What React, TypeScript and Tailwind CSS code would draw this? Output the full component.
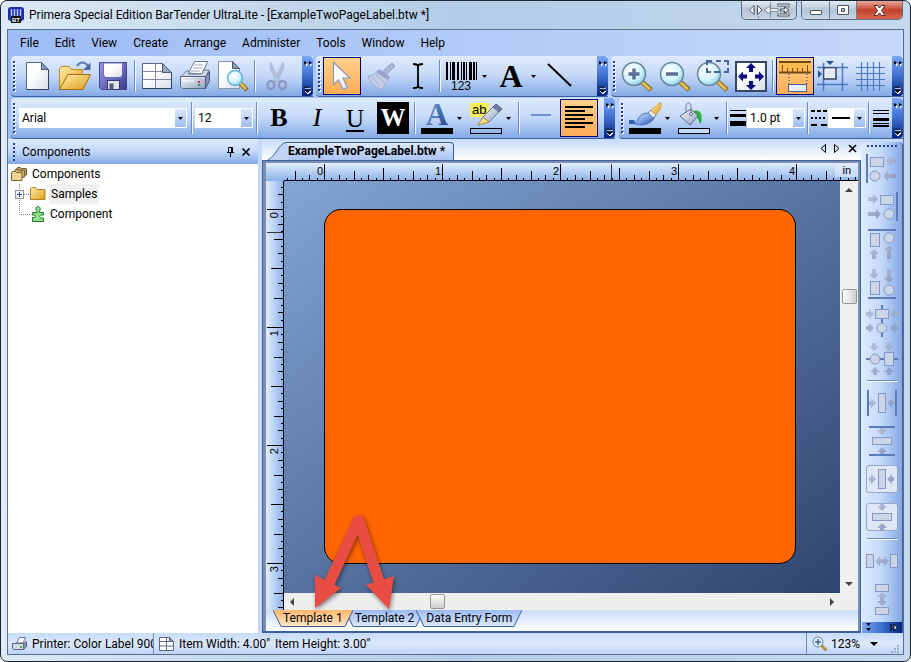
import type { ReactNode } from 'react';

const menus = ['File', 'Edit', 'View', 'Create', 'Arrange', 'Administer', 'Tools', 'Window', 'Help'];

const PX_PER_INCH = 118;
const STEP = PX_PER_INCH / 16;

// shared gradients for all the toolbar drawings
function Gradients() {
  return (
    <svg className="absolute h-0 w-0" aria-hidden="true">
      <defs>
        <linearGradient id="paper" x1="0" y1="0" x2="1" y2="1">
          <stop offset="0.4" stopColor="#fff" />
          <stop offset="1" stopColor="#d5dcec" />
        </linearGradient>
        <linearGradient id="gold" x1="0" y1="0" x2="1" y2="1">
          <stop offset="0" stopColor="#fff0a8" />
          <stop offset="1" stopColor="#e09a1c" />
        </linearGradient>
        <linearGradient id="violet" x1="0" y1="0" x2="1" y2="1">
          <stop offset="0" stopColor="#9c9ce8" />
          <stop offset="1" stopColor="#3c3c90" />
        </linearGradient>
        <linearGradient id="metal" x1="0" y1="0" x2="1" y2="1">
          <stop offset="0" stopColor="#fdfdff" />
          <stop offset="1" stopColor="#8e9cc0" />
        </linearGradient>
        <linearGradient id="bristle" x1="0" y1="0" x2="1" y2="1">
          <stop offset="0" stopColor="#dbe8ff" />
          <stop offset="0.5" stopColor="#7fa4e8" />
          <stop offset="1" stopColor="#2d51a4" />
        </linearGradient>
        <radialGradient id="lens" cx="0.4" cy="0.35" r="0.7">
          <stop offset="0" stopColor="#fff" />
          <stop offset="0.6" stopColor="#d3f3fd" />
          <stop offset="1" stopColor="#7fcdea" />
        </radialGradient>
        <linearGradient id="blueA" x1="0" y1="0" x2="1" y2="1">
          <stop offset="0" stopColor="#a9c2ea" />
          <stop offset="0.5" stopColor="#4a6fae" />
          <stop offset="1" stopColor="#1d3f7c" />
        </linearGradient>
        <linearGradient id="faded" x1="0" y1="0" x2="1" y2="1">
          <stop offset="0" stopColor="#b8c2dc" />
          <stop offset="1" stopColor="#8c9ac2" />
        </linearGradient>
      </defs>
    </svg>
  );
}

function Icon({ children }: { children: ReactNode }) {
  return (
    <svg className="h-8 w-8 shrink-0 overflow-visible" viewBox="0 0 32 32" fill="none" aria-hidden="true">
      {children}
    </svg>
  );
}

function Caret() {
  return (
    <svg className="h-[3px] w-[5px] shrink-0" viewBox="0 0 5 3" aria-hidden="true">
      <path d="M0 0h5L2.500 3z" fill="#000" />
    </svg>
  );
}

function ToolButton({ label, active, children }: { label: string; active?: boolean; children: ReactNode }) {
  return (
    <button
      aria-label={label}
      className={
        active
          ? 'flex h-[38px] w-[38px] shrink-0 items-center justify-center border border-[#000080] bg-linear-to-b from-[#ffd08c] to-[#ffac55]'
          : 'flex h-[38px] w-[38px] shrink-0 items-center justify-center'
      }
    >
      {children}
    </button>
  );
}

function DropButton({ label, children }: { label: string; children: ReactNode }) {
  return (
    <button aria-label={label} className="flex h-[38px] w-[49px] shrink-0 items-center gap-1 pl-[3px]">
      {children}
      <Caret />
    </button>
  );
}

function Separator() {
  return <div className="mx-[2px] h-[32px] w-[2px] shrink-0 border-l border-r border-l-[#6a8ccb] border-r-[#f1f6ff]" />;
}

function Grip() {
  return (
    <svg className="mx-[2px] h-8 w-[3px] shrink-0" aria-hidden="true">
      {[1, 5, 9, 13, 17, 21, 25, 29].map((y) => (
        <g key={y}>
          <path d={`M1 ${y + 1}h2v2h-2z`} fill="#fff" />
          <path d={`M0 ${y}h2v2h-2z`} fill="#27418e" />
        </g>
      ))}
    </svg>
  );
}

function Overflow() {
  return (
    <button aria-label="Toolbar options" className="ml-auto w-[11px] shrink-0 self-stretch rounded-r-sm bg-linear-to-b from-[#7aa7f3] via-[#3e6fd0] to-[#04217f]">
      <svg className="h-full w-full" viewBox="0 0 11 41" aria-hidden="true">
        <path d="M3 6l2 2-2 2zM7 6l2 2-2 2z" transform="translate(1 1)" fill="#fff" />
        <path d="M2 5l3 2-3 2zM7 5l3 2-3 2z" fill="#000" />
        <path d="M3 33h6M3 36h6l-3 3z" stroke="#fff" fill="#fff" />
        <path d="M2 32h6M3 35h5l-2.500 2.500z" stroke="#000" fill="#000" />
      </svg>
    </button>
  );
}

function Toolbar({ className, children }: { className: string; children: ReactNode }) {
  return (
    <div
      role="toolbar"
      className={'flex h-[41px] items-center overflow-hidden rounded-l-sm border-b border-[#3b619c] bg-linear-to-b from-[#dfebfd] via-[#c3d8f8] to-[#84a9e5] ' + className}
    >
      <Grip />
      {children}
      <Overflow />
    </div>
  );
}

function Combo({ label, value, className }: { label: string; value: string; className: string }) {
  return (
    <div className={'relative h-5 shrink-0 bg-white ' + className}>
      <select aria-label={label} defaultValue={value} className="block h-5 w-full appearance-none bg-transparent pl-[3px] text-[12px] leading-5 outline-none">
        <option value={value}>{value}</option>
      </select>
      <span className="pointer-events-none absolute top-px right-px bottom-px flex w-[11px] items-center justify-center bg-linear-to-b from-[#dbe8fc] to-[#9dbdf0]">
        <Caret />
      </span>
    </div>
  );
}

function Lens({ cx, children }: { cx: number; children?: ReactNode }) {
  return (
    <Icon>
      <path d="M20 21l10 9" stroke="#8a6a1e" strokeWidth="5" />
      <path d="M20 21l9 8.500" stroke="#e9be55" strokeWidth="3" />
      <circle cx={cx} cy="14" r="11.500" fill="url(#lens)" stroke="#6d8494" strokeWidth="1.500" />
      {children}
    </Icon>
  );
}

function TitleBar() {
  return (
    <header className="flex h-[28px] items-start pr-[7px] pl-[7px]">
      <svg className="mt-[6px] h-4 w-4 shrink-0" viewBox="0 0 16 16" aria-hidden="true">
        <rect width="16" height="14" rx="3" fill="#1b2aa8" />
        <path d="M3.500 2v9M6.500 2v9M9.500 2v9M12.500 2v9" stroke="#b6c6ff" strokeWidth="1.500" />
        <rect x="3" y="9" width="10" height="7" fill="#111" />
        <text x="8" y="15" textAnchor="middle" fontSize="6" fontWeight="bold" fill="#fff" fontFamily="Liberation Sans, sans-serif">
          BT
        </text>
      </svg>
      <h1 className="ml-[5px] truncate pt-[5px] text-[12px] leading-[18px]">Primera Special Edition BarTender UltraLite - [ExampleTwoPageLabel.btw *]</h1>
      <div className="ml-auto flex h-[19px] shrink-0 overflow-hidden rounded-b-[5px] border border-t-0 border-[#5c6d80] bg-linear-to-b from-[#e3ebf3] via-[#b4c4d6] to-[#c8d8e8]">
        <button aria-label="Move to other monitor" className="flex w-[54px] items-center justify-center">
          <svg className="h-4 w-[54px]" viewBox="0 0 54 16" aria-hidden="true">
            <path d="M12 3.500v9L7.500 8zM15.500 3.500v9L20 8z" fill="#fff" stroke="#4a5566" />
            <path d="M22 8l6-4v2.500h8v3h-8V12z" fill="#e8eef4" stroke="#8792a0" />
            <path d="M28.500 0v16M16.500 14v2" stroke="#7b8a9a" />
            <path d="M37 5V3h9v2.500M46 10.500V13h-9v-2" fill="none" stroke="#4a5566" strokeWidth="3" />
            <path d="M37 5V3h9v2.500M46 10.500V13h-9v-2" fill="none" stroke="#fff" />
            <path d="M38.500 7h4V5l4.500 3-4.500 3V9h-4z" fill="#fff" stroke="#4a5566" />
          </svg>
        </button>
      </div>
      <div className="ml-[4px] flex h-[19px] shrink-0 overflow-hidden rounded-b-[5px] border border-t-0 border-[#5c6d80]">
        <button aria-label="Minimize" className="flex w-[28px] items-center justify-center border-r border-[#6d7d8f] bg-linear-to-b from-[#e3ebf3] via-[#b4c4d6] to-[#c8d8e8]">
          <span className="mt-1 h-[5px] w-3 rounded-[1px] border border-[#4a5566] bg-white" />
        </button>
        <button aria-label="Maximize" className="flex w-[27px] items-center justify-center border-r border-[#6d7d8f] bg-linear-to-b from-[#e3ebf3] via-[#b4c4d6] to-[#c8d8e8]">
          <svg className="h-[11px] w-3" viewBox="0 0 12 11" aria-hidden="true">
            <path d="M.5 .5h11v9H.5zM4.500 3.500v3h3v-3z" fill="#fff" fillRule="evenodd" stroke="#4a5566" />
          </svg>
        </button>
        <button aria-label="Close" className="flex w-[45px] items-center justify-center bg-linear-to-b from-[#e8a99b] via-[#c2402b] to-[#d9694d]">
          <svg className="h-[11px] w-[13px]" viewBox="0 0 13 11" aria-hidden="true">
            <path d="M1 .5h3.500l2 2.500 2-2.500H12L8.500 5.500l3.500 5H8.500l-2-2.500-2 2.500H1l3.500-5z" fill="#fff" stroke="#5b2a2a" />
          </svg>
        </button>
      </div>
    </header>
  );
}

function StandardToolbar() {
  return (
    <Toolbar className="w-[302px] shrink-0">
      <ToolButton label="New">
        <Icon>
          <path d="M5.500 2.500h15l7 7v20h-22z" fill="url(#paper)" stroke="#5a6885" />
          <path d="M20.500 2.500v7h7z" fill="#8d99b4" stroke="#4a5877" />
          <path d="M27.500 10v19.500h-22" stroke="#33425f" />
        </Icon>
      </ToolButton>
      <ToolButton label="Open">
        <Icon>
          <path d="M.5 29V9l2-2.500h8l2 3h11v4" fill="url(#gold)" stroke="#b98a2a" />
          <path d="M.5 29.500L9 14.500h22.500L24 29.500z" fill="url(#gold)" stroke="#a06e12" />
          <path d="M18 6c3-5 8-4.500 11 0" stroke="#5b7bb0" strokeWidth="2" />
          <path d="M31.500 2.500V10H24z" fill="#4a6ba5" />
        </Icon>
      </ToolButton>
      <ToolButton label="Save">
        <Icon>
          <path d="M2.500 2.500h27v27h-25l-2-2z" fill="url(#violet)" stroke="#45458f" />
          <path d="M6.500 3h19v12l-2 2.500h-15l-2-2.500z" fill="url(#paper)" stroke="#6b6bb8" />
          <path d="M10.500 20.500h12v9h-12z" fill="#dfe3ee" stroke="#343477" />
          <path d="M12.500 23.500h4v6h-4z" fill="#50587c" />
        </Icon>
      </ToolButton>
      <Separator />
      <ToolButton label="Page setup">
        <Icon>
          <path d="M1.500 3.500h20l9 9v16h-29z" fill="url(#paper)" stroke="#5a6885" />
          <path d="M1.500 11.500h20M1.500 19.500h29M14.500 3.500v25" stroke="#7f8aa2" />
          <path d="M21.500 3.500v9h9z" fill="#9aa6bd" stroke="#4a5877" />
          <path d="M30.500 12.500v16h-29" stroke="#33425f" />
        </Icon>
      </ToolButton>
      <ToolButton label="Print">
        <Icon>
          <path d="M9.500 13l6-11.500h13L23 14z" fill="#fff" stroke="#6b7890" />
          <path d="M15 5h9M14 8h9M12 11h9" stroke="#9aa5bb" />
          <path d="M1.500 17l6-6h3l-1 3h13l2-4h5.500l-3 7z" fill="#cfd6e4" stroke="#6b7890" />
          <path d="M1.500 16.500h25v12h-23l-2-2z" fill="url(#metal)" stroke="#5a6885" />
          <path d="M26.500 16.500l4-5v9l-4 8z" fill="#8793ad" stroke="#4a5877" />
          <path d="M3 21h12" stroke="#fff" />
          <path d="M19 21h2v2h-2z" fill="#d13a2a" />
          <path d="M19 24h2v2h-2z" fill="#37a33b" />
        </Icon>
      </ToolButton>
      <ToolButton label="Print preview">
        <Icon>
          <path d="M1.500 1.500h14l7 7v20h-21z" fill="url(#paper)" stroke="#8a94a8" />
          <path d="M15.500 1.500v7h7z" fill="#8d99b4" stroke="#4a5877" />
          <path d="M23 23l7 7" stroke="#8a6a1e" strokeWidth="4.500" />
          <path d="M23 23l6 6" stroke="#e9be55" strokeWidth="2.500" />
          <circle cx="18" cy="18" r="7.500" fill="url(#lens)" stroke="#62b4d8" strokeWidth="1.500" />
        </Icon>
      </ToolButton>
      <Separator />
      <ToolButton label="Cut">
        <Icon>
          <path d="M9.500 2l9 19-3 1L9 8zM22 2l-9 19 3 1L23 8z" fill="#b4bfdb" stroke="#98a5c8" strokeWidth="0.500" />
          <ellipse cx="10" cy="25" rx="3.500" ry="4" stroke="#8b97c3" strokeWidth="2.500" />
          <ellipse cx="21.500" cy="25" rx="3.500" ry="4" stroke="#8b97c3" strokeWidth="2.500" />
        </Icon>
      </ToolButton>
    </Toolbar>
  );
}

function CreateToolbar() {
  const bars = [
    [0, 2], [4, 1], [6, 3], [11, 2], [15, 1], [17, 2], [20, 1], [23, 3], [27, 2], [30, 1],
  ];
  return (
    <Toolbar className="w-[292px] shrink-0">
      <ToolButton label="Select" active>
        <Icon>
          <path d="M7.500 2.500v22l5-4.500 4.500 9.500 4.500-2-4.500-9.500h7z" fill="url(#paper)" stroke="#8c96b5" strokeWidth="1.200" />
        </Icon>
      </ToolButton>
      <ToolButton label="Format painter">
        <Icon>
          <path d="M28 3l3 3-9 9-4-3z" fill="#a9b5d6" stroke="#8f9cc4" />
          <path d="M15 9l11 8-2 3L12 12z" fill="#98a5ca" />
          <path d="M12 12l12 8-6 9C12 28 6 23 4 16c3 0 6-1 8-4z" fill="#c2cce4" stroke="#a0accc" />
          <path d="M8 17l8 9M12 15l9 8" stroke="#a5b1d1" />
        </Icon>
      </ToolButton>
      <ToolButton label="Text tool">
        <Icon>
          <path d="M11 4c3 0 5 0 5 2.500C16 4 18 4 21 4M16 5v22M11 28c3 0 5 0 5-2.500 0 2.500 2 2.500 5 2.500" stroke="#000" strokeWidth="1.800" />
        </Icon>
      </ToolButton>
      <Separator />
      <DropButton label="Create barcode">
        <Icon>
          {bars.map(([x, w]) => (
            <rect key={x} x={x} y="2" width={w} height="18" fill="#000" />
          ))}
          <text x="15" y="30" textAnchor="middle" fontSize="12" fill="#000" fontFamily="Liberation Sans, sans-serif">
            123
          </text>
        </Icon>
      </DropButton>
      <DropButton label="Create text">
        <span className="w-8 text-center font-['Liberation_Serif',serif] text-[32px] leading-8 font-bold">A</span>
      </DropButton>
      <ToolButton label="Create line">
        <Icon>
          <path d="M4 4l23 22" stroke="#000" strokeWidth="2" />
        </Icon>
      </ToolButton>
    </Toolbar>
  );
}

function ViewToolbar() {
  return (
    <Toolbar className="min-w-0 flex-1">
      <ToolButton label="Zoom in">
        <Lens cx={13}>
          <path d="M13 8.500v11M7.500 14h11" stroke="#5b6f98" strokeWidth="3.500" />
        </Lens>
      </ToolButton>
      <ToolButton label="Zoom out">
        <Lens cx={13}>
          <path d="M7 14h12" stroke="#5b6f98" strokeWidth="3.500" />
        </Lens>
      </ToolButton>
      <ToolButton label="Zoom to region">
        <Lens cx={12}>
          <path d="M10 5V1h5M19 1h5M27 1h4v4M31 8v4h-4M23 12h-6M14 12h-4V8" stroke="#46669f" strokeWidth="2" />
        </Lens>
      </ToolButton>
      <ToolButton label="Fit to window">
        <Icon>
          <rect x="1" y="2" width="30" height="29" fill="url(#paper)" stroke="#36465f" strokeWidth="2" />
          <path d="M16 3l5 5h-3v4h-4V8h-3zM16 30l5-5h-3v-4h-4v4h-3zM3 16.500l5-5v3h4v4H8v3zM29 16.500l-5-5v3h-4v4h4v3z" fill="#0a0a7e" />
        </Icon>
      </ToolButton>
      <Separator />
      <ToolButton label="Rulers" active>
        <Icon>
          <rect x="0" y="1" width="32" height="12" fill="#ffb94f" />
          <path d="M0 2h32M0 12.500h32" stroke="#6b4a12" strokeWidth="2" />
          <path d="M3.500 5v7M8.500 8v4M13.500 8v4M18.500 8v4M23.500 8v4M28.500 5v7" stroke="#7b5518" />
          <path d="M10 14v10M28 14v10" stroke="#27418e" strokeDasharray="1 2" />
          <rect x="9.500" y="24.500" width="18" height="7" fill="#e9effc" stroke="#4a5f95" />
        </Icon>
      </ToolButton>
      <ToolButton label="Snap to grid">
        <Icon>
          <path d="M0 7.500h31M0 24.500h31M6.500 3v28M25.500 3v28" stroke="#4d79c2" strokeWidth="1.500" />
          <rect x="7" y="8" width="12" height="11" fill="#e4e9f3" stroke="#33415f" strokeWidth="1.500" />
          <path d="M8 18V9h10" stroke="#fff" />
          <path d="M9 1h8l-4 4zM1 10v8l4-4z" fill="#29529c" />
        </Icon>
      </ToolButton>
      <ToolButton label="Grid">
        <Icon>
          <path d="M1 7.500h29M1 13.500h29M1 19.500h29M1 25.500h29M6.500 2v29M12.500 2v29M18.500 2v29M24.500 2v29" stroke="#4d79c2" strokeWidth="1.200" />
        </Icon>
      </ToolButton>
    </Toolbar>
  );
}

function TextToolbar() {
  return (
    <Toolbar className="w-[604px] shrink-0">
      <Combo label="Font" value="Arial" className="ml-px w-[168px]" />
      <div className="w-[2px]" />
      <Separator />
      <Combo label="Font size" value="12" className="w-[58px]" />
      <div className="w-px" />
      <Separator />
      <ToolButton label="Bold">
        <span className="font-['Liberation_Serif',serif] text-[26px] leading-8 font-bold">B</span>
      </ToolButton>
      <ToolButton label="Italic">
        <span className="font-['Liberation_Serif',serif] text-[26px] leading-8 italic">I</span>
      </ToolButton>
      <ToolButton label="Underline">
        <span className="mt-[3px] border-b-2 border-black font-['Liberation_Serif',serif] text-[25px] leading-[22px]">U</span>
      </ToolButton>
      <ToolButton label="White on black">
        <span className="h-8 w-8 bg-black font-['Liberation_Serif',serif] text-[25px] leading-8 font-bold text-white">W</span>
      </ToolButton>
      <Separator />
      <DropButton label="Text color">
        <Icon>
          <text x="16" y="23" textAnchor="middle" fontSize="31" fontWeight="bold" fill="url(#blueA)" fontFamily="Liberation Serif, serif">
            A
          </text>
          <rect y="26" width="32" height="6" fill="#000" />
        </Icon>
      </DropButton>
      <DropButton label="Highlight color">
        <Icon>
          <rect x="0" y="1" width="19" height="14" fill="#f3f05c" />
          <text x="2" y="12" fontSize="13" fill="#000" fontFamily="Liberation Sans, sans-serif">
            ab
          </text>
          <path d="M13 15L26 2l6 5-13 13z" fill="url(#metal)" stroke="#6c7894" />
          <path d="M26 2l6 5-3 3-6-5z" fill="#7280a4" stroke="#56648a" />
          <path d="M8 23l5-8 6 5z" fill="#f6e08a" stroke="#a38b3c" />
          <rect x="0.500" y="26.500" width="31" height="5" stroke="#000" />
        </Icon>
      </DropButton>
      <Separator />
      <ToolButton label="Line">
        <Icon>
          <path d="M6 13h20" stroke="#6f8fd0" strokeWidth="2" />
        </Icon>
      </ToolButton>
      <ToolButton label="Align left" active>
        <Icon>
          <path d="M2 5h28M2 9h20M2 13h28M2 17h20M2 21h28M2 25h20" stroke="#000" strokeWidth="2" />
        </Icon>
      </ToolButton>
    </Toolbar>
  );
}

function LineToolbar() {
  return (
    <Toolbar className="min-w-0 flex-1">
      <DropButton label="Line color">
        <Icon>
          <path d="M0 18h5l2 4H0z" fill="#2b5fb5" />
          <path d="M5 21.500c3-1 3-3 5-6 3-4 7-5 10-4 3 1 6 3 5 5-4 6-13 8-20 5z" fill="url(#bristle)" stroke="#4468b4" />
          <path d="M19 11l3-3 5 5-2 3c-2-1-4-3-6-5z" fill="#dfe4ee" stroke="#6d7b96" />
          <path d="M22 8L32 0v6l-5 7z" fill="url(#gold)" stroke="#b98a2a" strokeWidth="0.500" />
          <rect y="26" width="32" height="6" fill="#000" />
        </Icon>
      </DropButton>
      <DropButton label="Fill color">
        <Icon>
          <path d="M16 9c7-2 9 4 7 13-3-1-1-6-6-7z" fill="#2fb43a" />
          <path d="M2 14L13 7l7 7-8 9z" fill="url(#metal)" stroke="#5a6885" />
          <path d="M8 10V4c0-4 5-4 5 0v7" stroke="#6c7894" />
          <circle cx="13" cy="12" r="1.500" fill="#fff" stroke="#5a6885" />
          <rect x="0.500" y="26.500" width="31" height="5" fill="#c5d8f7" stroke="#000" />
        </Icon>
      </DropButton>
      <Separator />
      <svg className="h-8 w-[17px] shrink-0" viewBox="0 0 17 32" aria-hidden="true">
        <path d="M0 8h16v1H0zM0 12h16v3H0zM0 19h16v5H0z" />
      </svg>
      <Combo label="Line thickness" value="1.0 pt" className="w-[58px]" />
      <Separator />
      <svg className="h-8 w-[17px] shrink-0" viewBox="0 0 17 32" stroke="#000" strokeWidth="2" aria-hidden="true">
        <path d="M0 9h16" strokeDasharray="4 2" />
        <path d="M0 16h16" strokeDasharray="2 2" />
        <path d="M0 23h16" strokeDasharray="6 4" />
      </svg>
      <div className="relative w-[38px] shrink-0">
        <Combo label="Dash style" value="" className="w-full" />
        <span className="pointer-events-none absolute top-[9px] left-1 h-[2px] w-[18px] bg-black" />
      </div>
      <Separator />
      <svg className="ml-px h-8 w-4 shrink-0" viewBox="0 0 16 32" aria-hidden="true">
        <path d="M0 8h16v1H0zM0 11h16v1H0zM0 16h16v3H0zM0 21h16v1H0zM0 23h16v2H0z" />
      </svg>
    </Toolbar>
  );
}

function ComponentsPanel() {
  return (
    <aside className="flex w-[250px] shrink-0 flex-col bg-white">
      <div className="flex h-[25px] items-center bg-linear-to-b from-[#dfebfd] via-[#c3d8f8] to-[#84a9e5] pr-[7px]">
        <svg className="ml-[5px] h-5 w-[3px]" aria-hidden="true">
          <path d="M0 1h2v2H0zM0 5h2v2H0zM0 9h2v2H0zM0 13h2v2H0zM0 17h2v2H0z" fill="#27418e" />
        </svg>
        <h2 className="ml-[6px] text-[12px]">Components</h2>
        <button aria-label="Auto hide" className="ml-auto">
          <svg className="h-[11px] w-[9px]" viewBox="0 0 9 11" fill="none" stroke="#000" aria-hidden="true">
            <path d="M2.500 6V1.500h4V6M5.500 1.500V6M1 6.500h7M4.500 7v4" />
          </svg>
        </button>
        <button aria-label="Close panel" className="ml-[6px]">
          <svg className="h-[10px] w-[10px]" viewBox="0 0 10 10" aria-hidden="true">
            <path d="M1.500 1.500l7 7M8.500 1.500l-7 7" stroke="#000" strokeWidth="1.600" />
          </svg>
        </button>
      </div>
      <ul className="text-[12px] leading-5">
        <li className="flex h-5 items-center">
          <svg className="ml-[3px] h-[14px] w-4" viewBox="0 0 16 14" aria-hidden="true">
            <path d="M5.500 9V2l1-1.500h3l1 1h5V8z" fill="#b79a5a" stroke="#776033" />
            <path d="M3.500 11V4l1-1.500h3l1 1h5V10z" fill="#cdb06d" stroke="#776033" />
            <path d="M.5 13.500V6l1-1.500h3l1 1h5.500v8z" fill="#f0d592" stroke="#776033" />
          </svg>
          <span className="ml-[5px]">Components</span>
        </li>
        <li className="flex h-5 items-center">
          <svg className="ml-[7px] h-5 w-[15px]" viewBox="0 0 15 20" fill="none" aria-hidden="true">
            <path d="M4.500 0v20" stroke="#888" strokeDasharray="1 1" />
            <path d="M9 10.500h6" stroke="#888" strokeDasharray="1 1" />
            <rect x="0.500" y="6.500" width="8" height="8" fill="#f4f4f4" stroke="#919191" />
            <path d="M2 10.500h5M4.500 8v5" stroke="#2b4a8b" />
          </svg>
          <svg className="h-[14px] w-4" viewBox="0 0 16 14" aria-hidden="true">
            <path d="M.5 12.500v-11l1-1h4l1.500 2h8v10z" fill="url(#gold)" stroke="#ad8228" />
          </svg>
          <span className="ml-[3px] bg-[#f0f0f0] px-[2px]">Samples</span>
        </li>
        <li className="flex h-5 items-center">
          <svg className="ml-[7px] h-5 w-[15px]" viewBox="0 0 15 20" fill="none" aria-hidden="true">
            <path d="M4.500 0v10.500H15" stroke="#888" strokeDasharray="1 1" />
          </svg>
          <svg className="ml-px h-4 w-[15px]" viewBox="0 0 15 16" aria-hidden="true">
            <path
              d="M1.500 6.500h4.500V5C4 3 5 .5 7 .5S10 3 8.500 5v1.500h4V9H11c-2.500-1-3.500 3.500 0 3h1.500v3.500h-11v-4h1.500c2 0 2-2.500 0-2.500H1.500z"
              fill="#8fe08f"
              stroke="#1d7a26"
            />
          </svg>
          <span className="ml-1">Component</span>
        </li>
      </ul>
    </aside>
  );
}

// the ticks run on past the visible end, the svg cuts them off
function Ruler({ inches, vertical }: { inches: number; vertical?: boolean }) {
  const origin = vertical ? 28 : 58;
  const ticks = [];
  for (let i = vertical ? -3 : -5; i < 256; i++) {
    const pos = Math.round(origin + i * STEP) + 0.5;
    const len = i % 16 === 0 ? 17 : i % 8 === 0 ? 13 : i % 4 === 0 ? 10 : i % 2 === 0 ? 6 : 3;
    ticks.push(<path key={i} d={vertical ? `M18 ${pos}h${-len}` : `M${pos} 18v${-len}`} />);
  }
  return (
    <svg className={vertical ? 'block h-full w-[18px]' : 'block h-[18px] w-full'} aria-hidden="true">
      <g stroke="#000">
        {ticks}
        <path d={vertical ? 'M17.500 0v4000' : 'M18 17.500h4000'} />
        <path d={vertical ? 'M1 51.500h16' : 'M345.500 1v16'} stroke="#333" />
      </g>
      <g fontSize="11" fontFamily="Liberation Sans, sans-serif" fill="#000">
        {Array.from({ length: inches + 1 }, (_, n) => {
          const at = origin + n * PX_PER_INCH;
          return vertical ? (
            <text key={n} textAnchor="end" transform={`translate(12 ${at + 3}) rotate(-90)`}>
              {n}
            </text>
          ) : (
            <text key={n} x={at - 1} y="12" textAnchor="end">
              {n}
            </text>
          );
        })}
      </g>
    </svg>
  );
}

function SheetTab({ active, children }: { active?: boolean; children: ReactNode }) {
  const fill = active ? 'url(#tabOn)' : 'url(#tabOff)';
  return (
    <button className={active ? 'relative z-10 flex h-[17px]' : 'relative -ml-2 flex h-[17px]'}>
      <svg className="h-[17px] w-2" viewBox="0 0 8 17" aria-hidden="true">
        <defs>
          <linearGradient id="tabOn" x1="0" y1="0" x2="0" y2="1">
            <stop offset="0" stopColor="#ffb86c" />
            <stop offset="1" stopColor="#ffe4c4" />
          </linearGradient>
          <linearGradient id="tabOff" x1="0" y1="0" x2="0" y2="1">
            <stop offset="0" stopColor="#9dbbf1" />
            <stop offset="1" stopColor="#dce8fc" />
          </linearGradient>
        </defs>
        <path d="M0 0l8 17V0z" fill={fill} />
        <path d="M0 0l8 16.500" stroke="#3b619c" />
      </svg>
      <span
        className={
          active
            ? 'h-[17px] border-b border-[#3b619c] bg-linear-to-b from-[#ffb86c] to-[#ffe4c4] px-[2px] text-[12px] leading-[16px]'
            : 'h-[17px] border-b border-[#3b619c] bg-linear-to-b from-[#9dbbf1] to-[#dce8fc] px-[2px] text-[12px] leading-[16px]'
        }
      >
        {children}
      </span>
      <svg className="h-[17px] w-2" viewBox="0 0 8 17" aria-hidden="true">
        <path d="M0 17L8 0H0z" fill={fill} />
        <path d="M0 16.500L8 0" stroke="#3b619c" />
      </svg>
    </button>
  );
}

function PointerArrows() {
  return (
    <svg className="pointer-events-none absolute -top-[100px] left-[44px] z-20 h-[104px] w-[90px] drop-shadow-[1px_2px_2px_rgba(0,0,0,0.5)]" viewBox="310 510 90 104" aria-hidden="true">
      <path d="M358 521L326 590M359 521L381 588" stroke="#e84c43" strokeWidth="11" strokeLinecap="round" fill="none" />
      <path d="M315 608V575l26 13zM389 609l-23-24 28-9z" fill="#e84c43" />
    </svg>
  );
}

function DocumentArea() {
  return (
    <main className="flex min-w-0 flex-1 flex-col">
      <div className="flex h-[21px] items-end bg-linear-to-b from-[#c5daf9] to-white">
        <button className="ml-[6px] flex h-[18px]">
          <svg className="h-[18px] w-5" viewBox="0 0 20 18" aria-hidden="true">
            <path d="M0 18c6 0 10-17 18-17.500h2V18z" fill="#c4d6f8" />
            <path d="M0 17.500c6-1 11-16 18-17h2" fill="none" stroke="#3b619c" />
          </svg>
          <span className="h-[18px] rounded-tr-sm border-t border-r border-[#3b619c] bg-linear-to-b from-[#dfe9fc] to-[#a9c4f4] pr-[8px] text-[12px] leading-[16px] font-bold">
            ExampleTwoPageLabel.btw *
          </span>
        </button>
        <div className="mr-1 ml-auto flex items-center gap-2 pb-[7px]">
          <button aria-label="Previous document">
            <svg className="h-[9px] w-[6px]" viewBox="0 0 6 9" aria-hidden="true">
              <path d="M5.500 .5v8l-4.500-4z" fill="none" stroke="#000" />
            </svg>
          </button>
          <button aria-label="Next document">
            <svg className="h-[9px] w-[6px]" viewBox="0 0 6 9" aria-hidden="true">
              <path d="M.5 .5v8l4.500-4z" fill="none" stroke="#000" />
            </svg>
          </button>
          <button aria-label="Close document">
            <svg className="h-[9px] w-[9px]" viewBox="0 0 9 9" aria-hidden="true">
              <path d="M1 1l7 7M8 1L1 8" stroke="#000" strokeWidth="1.600" />
            </svg>
          </button>
        </div>
      </div>
      <div className="flex flex-1 flex-col border border-b-2 border-[#3b619c] bg-[#7d8fae] pt-[2px] pr-[2px] pl-[3px]">
        <div className="relative h-[18px] bg-linear-to-b from-[#e2edfd] to-[#8db1ea]">
          <Ruler inches={4} />
          <span className="absolute top-0 right-0 bg-linear-to-b from-[#e2edfd] to-[#c6daf8] px-[7px] font-['Liberation_Sans',sans-serif] text-[11px] leading-[14px]">in</span>
        </div>
        <div className="flex flex-1">
          <div className="relative w-[18px] shrink-0 overflow-hidden bg-linear-to-r from-[#e2edfd] to-[#8db1ea]">
            <div className="absolute inset-0">
              <Ruler inches={3} vertical />
            </div>
          </div>
          <div className="flex min-w-0 flex-1 flex-col">
            <div className="flex flex-1">
              <div className="relative min-h-[412px] min-w-0 flex-1 overflow-hidden bg-linear-to-br from-[#84a4d4] to-[#2f4570]">
                <div className="absolute top-[28px] left-[40px] h-[355px] w-[472px] rounded-[17px] border border-black bg-[#ff6600]" />
              </div>
              <div className="flex w-[18px] shrink-0 flex-col items-center bg-[#f0f0f0] py-[7px]">
                <ScrollArrow d="M0 4l4-4 4 4z" />
                <div className="flex-[7]" />
                <div className="h-[15px] w-[15px] rounded-xs border border-[#979797] bg-linear-to-r from-white to-[#cfcfcf]" />
                <div className="flex-[20]" />
                <ScrollArrow d="M0 0l4 4 4-4z" />
              </div>
            </div>
            <div className="flex h-[17px] items-center bg-[#eeeeee]">
              <svg className="ml-[6px] h-2 w-1" viewBox="0 0 4 8" aria-hidden="true">
                <path d="M4 0v8L0 4z" fill="#444" />
              </svg>
              <div className="ml-[136px] h-[15px] w-[15px] rounded-xs border border-[#979797] bg-linear-to-b from-white to-[#cfcfcf]" />
              <svg className="mr-[24px] ml-auto h-2 w-1" viewBox="0 0 4 8" aria-hidden="true">
                <path d="M0 0v8l4-4z" fill="#444" />
              </svg>
            </div>
          </div>
        </div>
        <div className="relative flex h-[21px] bg-linear-to-b from-[#ccdefa] to-white pl-[7px]">
          <SheetTab active>Template 1</SheetTab>
          <SheetTab>Template 2</SheetTab>
          <SheetTab>Data Entry Form</SheetTab>
          <PointerArrows />
        </div>
      </div>
    </main>
  );
}

function ScrollArrow({ d }: { d: string }) {
  return (
    <svg className="h-1 w-2 shrink-0" viewBox="0 0 8 4" aria-hidden="true">
      <path d={d} fill="#444" />
    </svg>
  );
}

const left = (x: number, y: number, w = 10) => `M${x} ${y}l5-5v3h${w - 5}v4h${5 - w}v3z`;
const right = (x: number, y: number, w = 10) => `M${x} ${y}l-5-5v3h${5 - w}v4h${w - 5}v3z`;
const up = (x: number, y: number, h = 10) => `M${x} ${y}l5 5h-3v${h - 5}h-4v${5 - h}h-3z`;
const down = (x: number, y: number, h = 10) => `M${x} ${y}l5-5h-3v${5 - h}h-4v${h - 5}h-3z`;

type Shape = {
  label: string;
  bars?: string;
  rects?: number[][];
  circle?: number[];
  arrows: string;
  boxed?: boolean;
};

const alignTools: Shape[][] = [
  [
    { label: 'Align left edges', bars: 'M1 1v29', rects: [[4, 4, 13, 9]], circle: [9, 23], arrows: left(20, 8, 10) + left(17, 23, 13) },
    { label: 'Align right edges', bars: 'M31 1v29', rects: [[14, 4, 13, 9]], circle: [23, 23], arrows: right(12, 8, 10) + right(15, 23, 13) },
    { label: 'Align top edges', bars: 'M2 1h28', rects: [[4, 4, 9, 13]], circle: [23, 9], arrows: up(8, 20, 10) + up(23, 16, 14) },
    { label: 'Align bottom edges', bars: 'M2 31h28', rects: [[4, 14, 9, 13]], circle: [23, 23], arrows: down(8, 12, 10) + down(23, 16, 14) },
    { label: 'Align centers', bars: 'M16 0v32', rects: [[9, 4, 13, 9]], circle: [16, 23], arrows: right(8, 9, 8) + left(24, 9, 8) + right(8, 23, 8) + left(24, 23, 8) },
    { label: 'Align middles', bars: 'M0 16h32', rects: [[18, 9, 9, 13]], circle: [9, 16], arrows: down(8, 8, 8) + down(23, 8, 8) + up(9, 24, 8) + up(23, 24, 8) },
  ],
  [
    { label: 'Center horizontally', bars: 'M2 3v26M30 3v26', rects: [[12, 6, 7, 19]], arrows: right(10, 16, 7) + left(21, 16, 7) },
    { label: 'Center vertically', bars: 'M3 2h26M3 30h26', rects: [[6, 12, 19, 7]], arrows: down(16, 10, 7) + up(16, 22, 7) },
    { label: 'Center on label horizontally', boxed: true, rects: [[12, 6, 7, 19]], arrows: right(10, 16, 7) + left(21, 16, 7) },
    { label: 'Center on label vertically', boxed: true, rects: [[6, 12, 19, 7]], arrows: down(16, 10, 7) + up(16, 22, 7) },
  ],
  [
    { label: 'Space evenly across', rects: [[0, 9, 7, 13], [24, 9, 7, 13]], arrows: 'M9 16l5-5v3h4v-3l5 5-5 5v-3h-4v3z' },
    { label: 'Space evenly down', rects: [[9, 1, 13, 7], [9, 24, 13, 7]], arrows: 'M16 9l5 5h-3v4h3l-5 5-5-5h3v-4h-3z' },
  ],
];

function AlignToolbar() {
  return (
    <div role="toolbar" className="mt-[3px] flex w-[42px] shrink-0 flex-col items-center rounded-t-sm border-r border-[#3b619c] bg-linear-to-r from-[#dfebfd] via-[#c3d8f8] to-[#84a9e5] pl-px">
      <svg className="mt-[3px] h-[3px] w-8" aria-hidden="true">
        <path d="M1 1h32" stroke="#27418e" strokeWidth="2" strokeDasharray="2 2" />
      </svg>
      <div className="mt-[2px] flex flex-col items-center">
        {alignTools.map((group, g) => (
          <div key={g} className="flex flex-col items-center">
            {g > 0 && <div className="my-[2px] h-[2px] w-[31px] border-t border-b border-t-[#6a8ccb] border-b-white" />}
            {group.map((tool) => (
              <ToolButton key={tool.label} label={tool.label}>
                <Icon>
                  {tool.boxed && <rect x="0.500" y="2.500" width="31" height="27" rx="2.500" fill="#dfe7f6" stroke="#9aa9cb" />}
                  {tool.bars && <path d={tool.bars} stroke="#5f7bb5" strokeWidth="2" />}
                  {tool.rects?.map(([x, y, w, h]) => (
                    <rect key={`${x}-${y}`} x={x + 0.5} y={y + 0.5} width={w} height={h} fill="#ccd5e8" stroke="#8699c6" />
                  ))}
                  {tool.circle && <circle cx={tool.circle[0]} cy={tool.circle[1]} r="5" fill="#ccd5e8" stroke="#8699c6" />}
                  <path d={tool.arrows} fill="url(#faded)" />
                </Icon>
              </ToolButton>
            ))}
          </div>
        ))}
      </div>
      <button aria-label="Toolbar options" className="mt-auto flex h-[11px] w-full items-center justify-between bg-linear-to-r from-[#7aa7f3] via-[#3e6fd0] to-[#04217f] px-1">
        <svg className="h-[9px] w-[5px]" viewBox="0 0 5 9" aria-hidden="true">
          <path d="M0 0h5L2.500 3zM0 5h5L2.500 8z" />
        </svg>
        <svg className="h-[9px] w-[8px]" viewBox="0 0 8 9" aria-hidden="true">
          <path d="M1 1v7M4 1v7l3-3.500z" fill="#fff" stroke="#000" />
        </svg>
      </button>
    </div>
  );
}

function StatusBar() {
  return (
    <footer className="flex h-[21px] shrink-0 items-center bg-linear-to-b from-[#c8dbfa] via-[#dce8fb] to-[#bed4f7] text-[12px]">
      <div className="flex h-full w-[146px] items-center border-r border-[#6a8ccb] pl-1">
        <svg className="h-[14px] w-[15px] shrink-0" viewBox="0 0 15 14" aria-hidden="true">
          <path d="M4.500 6l3-5.500h6L11 6z" fill="#fff" stroke="#6b7890" />
          <path d="M.5 6.500h11v6H1.500l-1-1z" fill="#d5dbe6" stroke="#5a6885" />
          <path d="M11.500 6.500l3-2v5l-3 3z" fill="#8793ad" stroke="#5a6885" />
          <path d="M8 9h2v2H8z" fill="#37b33b" />
        </svg>
        <span className="ml-[5px] overflow-hidden whitespace-nowrap">Printer: Color Label 900</span>
      </div>
      <svg className="ml-[5px] h-[14px] w-[15px] shrink-0" viewBox="0 0 15 14" aria-hidden="true">
        <path d="M.5 .5h10l4 4v9H.5z" fill="#fff" stroke="#5a6885" />
        <path d="M.5 4.500h10M.5 9h14M7.500 .5v13" stroke="#5a6885" />
        <path d="M10.500 .5v4h4z" fill="#8d99b4" stroke="#5a6885" />
      </svg>
      <span className="ml-[5px] whitespace-nowrap">Item Width: 4.00"</span>
      <span className="ml-[5px] whitespace-nowrap">Item Height: 3.00"</span>
      <button className="mr-[3px] ml-auto flex h-full w-[94px] items-center border-l border-[#6a8ccb] pl-[5px]">
        <svg className="h-4 w-4" viewBox="0 0 16 16" aria-hidden="true">
          <path d="M9.500 9.500l5 5" stroke="#b88a2c" strokeWidth="2.500" />
          <circle cx="6" cy="6" r="5" fill="#d8f1fb" stroke="#6d8494" />
          <path d="M6 3v6M3 6h6" stroke="#4a5f8a" strokeWidth="1.500" />
        </svg>
        <span className="ml-[3px]">123%</span>
        <svg className="ml-[10px] h-1 w-2" viewBox="0 0 8 4" aria-hidden="true">
          <path d="M0 0h8L4 4z" />
        </svg>
        <svg className="ml-auto h-[9px] w-[9px] self-end" viewBox="0 0 9 9" aria-hidden="true">
          <path d="M6 0h2v2H6zM6 3h2v2H6zM3 3h2v2H3zM0 6h2v2H0zM3 6h2v2H3zM6 6h2v2H6z" fill="#9fb0cc" />
        </svg>
      </button>
    </footer>
  );
}

export default function App() {
  return (
    <div className="flex min-h-screen flex-col rounded-[7px] border border-[#1c2530] bg-linear-to-r from-[#dce9f6] via-[#b3cce7] to-[#c3d9ee] pb-[6px] font-[Roboto,'Liberation_Sans',sans-serif] text-black">
      <Gradients />
      <TitleBar />
      <div className="mx-[6px] flex flex-1 flex-col border border-[#5a6f88] bg-linear-to-r from-[#9ebcf5] to-[#c4d8fa]">
        <nav className="flex h-[26px] items-center gap-4 pl-[12px] text-[12px]">
          {menus.map((menu) => (
            <button key={menu}>{menu}</button>
          ))}
        </nav>
        <div className="flex gap-[3px] pl-[3px]">
          <StandardToolbar />
          <CreateToolbar />
          <ViewToolbar />
        </div>
        <div className="mt-px flex gap-1 pl-[3px]">
          <TextToolbar />
          <LineToolbar />
        </div>
        <div className="flex flex-1 bg-[#c5daf9]">
          <ComponentsPanel />
          <div className="w-1 shrink-0" />
          <DocumentArea />
          <AlignToolbar />
        </div>
        <StatusBar />
      </div>
    </div>
  );
}
